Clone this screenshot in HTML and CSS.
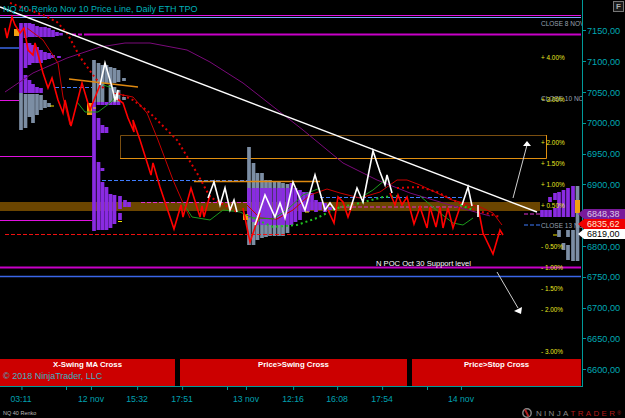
FILE: index.html
```html
<!DOCTYPE html>
<html lang="en">
<head>
    <meta charset="UTF-8">
    <meta name="viewport" content="width=device-width, initial-scale=1.0">
    <title>NQ 40 Renko - NinjaTrader chart</title>
    <link rel="stylesheet" href="styles.css">
</head>
<body>
    <div class="chart">
        <div class="main">
            <div class="plot">
                <svg class="plot-svg" width="582" height="386" viewBox="0 0 582 386">
                    <!-- levels and zones -->
                    <rect class="zone" x="0" y="202" width="540" height="9"/>
                    <path class="box-dark" d="M120.5 158V135.5H546"/>
                    <path class="box-light" d="M120 158.5H546.5V135"/>
                    <path class="level-magenta" d="M0 15.5H581"/>
                    <path class="level-blue-thin" d="M0 17.5H581"/>
                    <path class="level-magenta-thick" d="M88 34.5H581"/>
                    <path class="level-magenta-thick dashed" d="M72 34.5H88"/>
                    <path class="level-blue" d="M0 48H19"/>
                    <path class="level-magenta" d="M0 100.5H19M0 156.5H92M0 220.5H92"/>
                    <path class="level-magenta-thick" d="M0 267.5H581"/>
                    <path class="level-blue" d="M0 276.5H581"/>

                    <!-- TPO profiles, one stroke per column -->
                    <path class="tpo-purple" d="M21 23V93M25.5 23V38M25.5 43V68M25.5 75V93M29.5 23V37M33 24V37M37 26V37M41 27V37M45 27V37M49 28V37M53 30V37M57 32V36M61 33V35.5M29.5 43V65M33 45V63M37 47V63M41 50V63M45 52V60M49 53V59M53 55V58M59 56V58M29.5 80V93M33 84V93M37 87V93M41 88V93"/>
                    <path class="tpo-gray" d="M21 93V130M25.5 94V128M29.5 94V117M33 94V123M37 94V115M41 95V110M45 100V108M49 103V107"/>
                    <path class="tpo-gray" d="M94 60V102M98.5 63V102M102.5 65V102M106.5 65V83M110.5 67V83M114.5 68V83M118.5 70V82M124 78V81M110.5 85V102M114.5 87V102M118.5 90V102M124 97V100"/>
                    <path class="tpo-purple" d="M94 102V231M98.5 102V105M98.5 118V140M98.5 162V230M102.5 102V105M102.5 125V133M102.5 182V230M102.5 168V171M106.5 102V105M106.5 127V133M106.5 187V230M110.5 102V105M110.5 194V228M114.5 102V105M114.5 195V224M118.5 102V105M120 196V209M120 213V220M125 200V207M129 202V207"/>
                    <path class="tpo-gray" d="M249 147V245M253.5 163V245M257.5 173V240M262 173V238M266 180V237M270 180V236M274.5 181V236M279 182V236M283 183V236M287.5 184V233"/>
                    <path class="tpo-purple" d="M249 188V218M253.5 188V222M257.5 188V225M262 188V225M266 188V225M270 188V225M274.5 188V225M279 188V225M283 188V225M287.5 188V225M291.5 183V225M295.5 188V222M300 190V220M304 192V212M308 192V212M312 193V210M316 200V212M320 202V210M325 203V212M330 207V210"/>
                    <path class="tpo-gray" d="M577.5 186V261M573 230V261M568 245V260M568 230V237M563.5 243V250M559 230V237"/>
                    <path class="tpo-purple" d="M573 186V217M568 188V217M563.5 190V217M559 192V217M555 193V200M555 208V217M550 197V202M550 210V217M546 210V217M542 210V217"/>
                    <rect class="tpo-poc" x="575" y="200" width="5" height="13"/>
                    <rect class="tpo-poc" x="14" y="29" width="5" height="7"/>
                    <rect class="tpo-poc" x="87" y="103" width="5" height="12"/>
                    <rect class="tpo-poc" x="243" y="214" width="5" height="6"/>
                    <path class="tpo-mark" d="M93 108H96M50 106H54M118 221.5H122M553 235H557M305 212H309"/>

                    <!-- dashed session levels -->
                    <path class="level-dash-blue" d="M55 87.5H92M102 180.5H250M320 197.5H462M524 225H540"/>
                    <path class="level-dash-pink" d="M141 202.5H250M340 207H462M524 214H540"/>
                    <path class="level-dash-red" d="M5 234.5H502"/>
                    <path class="level-orange" d="M194 181.5H320M69 79L138 87"/>

                    <!-- thin moving averages -->
                    <polyline class="ma-purple" points="5,92 33,73 67,58 100,47 125,43 150,43 187,50 210,62 243,83 280,112 303,130 343,163 377,180 410,193 450,205 490,216"/>
                    <polyline class="ma-red" points="27,28 43,40 58,63 63,97 70,125"/>
                    <polyline class="ma-red" points="113,93 133,97 147,113 158,140 173,180 183,203 190,218"/>
                    <polyline class="ma-red" points="247,205 260,218 277,219 293,210 310,195 327,189 340,193 360,198 380,192 397,180 407,180 420,185 437,193 452,200 480,207 493,213 502,225"/>
                    <polyline class="ma-green" points="183,203 192,217 210,220 223,210 240,212 253,218 260,218 273,219 287,210 303,195 320,188"/>
                    <polyline class="ma-green" points="77,102 85,112 98,112 110,103 118,94"/>
                    <polyline class="ma-green" points="103,85 113,88"/>
                    <polyline class="ma-green" points="360,198 373,190 385,180"/>
                    <polyline class="ma-green" points="420,196 440,213 453,223 463,225 473,218"/>
                    <polyline class="dots-green" points="253,218 273,227 297,225 317,218 337,208 360,203 383,197 400,196"/>
                    <polyline class="dots-green" points="460,205 473,210"/>
                    <polyline class="dots-red" points="10,3 43,15 57,22 67,33 80,57 93,75 105,90"/>
                    <polyline class="dots-red" points="118,93 133,100 150,113 167,130 177,140 197,173 210,197 237,212"/>
                    <polyline class="dots-red" points="397,188 420,187 437,192 453,200 475,210 500,217"/>

                    <!-- price line -->
                    <polyline class="price-red" points="5,28 7,38 12,17 15,25 20,33 24,28 28,50 33,55 35,43 43,73 48,88 52,78 58,100 63,113 65,100 71,126 82,83 90,110 100,85"/>
                    <polyline class="price-red" points="116,98 123,103 128,118 134,132 133,120 140,140 151,175 153,163 160,187 174,229 181,205 183,217 191,188 200,217 202,206 204,217 210,195"/>
                    <polyline class="price-red" points="243,208 250,242 260,213"/>
                    <polyline class="price-red" points="328,210 334,223 338,197 343,202 348,217 353,203"/>
                    <polyline class="price-red" points="390,193 395,205 398,195 402,205 407,197 414,224 420,207 427,228 430,207 436,227 440,207 443,228 448,208 453,228 460,207"/>
                    <polyline class="price-red" points="478,207 483,233 493,254 500,230 503,235"/>
                    <polyline class="price-white" points="100,85 105,63 112,87 115,100 118,90 117,100"/>
                    <polyline class="price-white" points="208,198 214,182 220,205 225,188 230,210 234,200 237,212"/>
                    <polyline class="price-white" points="255,225 265,195 275,217 280,203 285,218 293,182 305,210 315,175 325,210 330,203 335,210"/>
                    <polyline class="price-white" points="350,210 357,188 363,202 373,151 380,172 385,185 387,175 392,193"/>
                    <polyline class="price-white" points="462,205 468,187 472,206"/>
                    <path class="price-white" d="M478 205V217"/>

                    <!-- drawing tools -->
                    <path class="trend" d="M0 7L537 212"/>
                    <path class="arrow-line" d="M513 198L527 145M497 272L518 308"/>
                    <path class="arrow-head" d="M523 146L527 141L531 146ZM514 311L522 307L521 314Z"/>

                    <!-- labels -->
                    <text class="title" x="3" y="12">NQ 40 Renko Nov 10 Price Line, Daily ETH TPO</text>
                    <text class="close-label" x="541" y="25.5">CLOSE 8 NOV</text>
                    <text class="close-label" x="541" y="101">CLOSE 10 NOV</text>
                    <text class="close-label" x="541" y="227.5">CLOSE 13 NOV</text>
                    <text class="pct" x="541" y="60">+ 4.00%</text>
                    <text class="pct" x="541" y="102">+ 3.00%</text>
                    <text class="pct" x="541" y="144.5">+ 2.00%</text>
                    <text class="pct" x="541" y="165.5">+ 1.50%</text>
                    <text class="pct" x="541" y="186.5">+ 1.00%</text>
                    <text class="pct" x="541" y="207.5">+ 0.50%</text>
                    <text class="pct" x="541" y="249">- 0.50%</text>
                    <text class="pct" x="541" y="270">- 1.00%</text>
                    <text class="pct" x="541" y="291">- 1.50%</text>
                    <text class="pct" x="541" y="312">- 2.00%</text>
                    <text class="pct" x="541" y="353.5">- 3.00%</text>
                    <text class="note" x="376" y="265.5">N POC Oct 30 Support level</text>
                </svg>

                <div class="signals">
                    <div class="signal signal-first">X-Swing MA Cross</div>
                    <div class="signal signal-mid">Price&gt;Swing Cross</div>
                    <div class="signal signal-last">Price&gt;Stop Cross</div>
                </div>
                <div class="copyright">© 2018 NinjaTrader, LLC</div>
            </div>

            <div class="price-axis">
                <div class="price">7150,00</div>
                <div class="price">7100,00</div>
                <div class="price">7050,00</div>
                <div class="price">7000,00</div>
                <div class="price">6950,00</div>
                <div class="price">6900,00</div>
                <div class="price"></div>
                <div class="price">6800,00</div>
                <div class="price">6750,00</div>
                <div class="price">6700,00</div>
                <div class="price">6650,00</div>
                <div class="price">6600,00</div>
                <div class="flags">
                    <div class="flag flag-purple">6848,38</div>
                    <div class="flag flag-red">6835,62</div>
                    <div class="flag flag-white">6819,00</div>
                </div>
                <div class="f-btn">F</div>
            </div>
        </div>

        <div class="time-axis">
            <div class="time-tick" style="left: 21px">03:11</div>
            <div class="time-tick" style="left: 66px"></div>
            <div class="time-tick" style="left: 91px">12 nov</div>
            <div class="time-tick" style="left: 137px">15:32</div>
            <div class="time-tick" style="left: 182px">17:51</div>
            <div class="time-tick" style="left: 227px"></div>
            <div class="time-tick" style="left: 246px">13 nov</div>
            <div class="time-tick" style="left: 293px">12:16</div>
            <div class="time-tick" style="left: 337px">16:08</div>
            <div class="time-tick" style="left: 382px">17:54</div>
            <div class="time-tick" style="left: 427px"></div>
            <div class="time-tick" style="left: 461px">14 nov</div>
        </div>

        <div class="footer">
            <span class="instrument">NQ 40 Renko</span>
            <span class="logo">
                <svg class="logo-icon" width="12" height="10" viewBox="0 0 12 10">
                    <circle cx="6" cy="5" r="4.2" fill="none" stroke="#8a8a8a" stroke-width="1.4"/>
                    <path d="M4 1.5L7.5 8.5" stroke="#b02020" stroke-width="2"/>
                </svg>
                <span class="logo-ninja">NINJA</span><span class="logo-trader">TRADER</span><span class="logo-reg">®</span>
            </span>
        </div>
    </div>
</body>
</html>
```

FILE: styles.css
```css
* {
    margin: 0;
    padding: 0;
    box-sizing: border-box;
}

body {
    background: #000;
    font-family: "Liberation Sans", Arial, sans-serif;
    overflow: hidden;
}

.chart {
    width: 625px;
    height: 418px;
    display: flex;
    flex-direction: column;
}

.main {
    display: flex;
    height: 387px;
}

.plot {
    position: relative;
    width: 583px;
    border-right: 1px solid #009a9a;
    border-bottom: 1px solid #009a9a;
}

.plot-svg {
    display: block;
}

.plot-svg path,
.plot-svg polyline {
    fill: none;
}

/* levels */
.zone { fill: #6b4500; }
.box-dark { stroke: #7a4e10; stroke-width: 1; }
.box-light { stroke: #e08f10; stroke-width: 1; }
.level-magenta { stroke: #e010e0; stroke-width: 1; }
.level-magenta-thick { stroke: #c800c8; stroke-width: 2; }
.level-magenta-thick.dashed { stroke-dasharray: 4 2; }
.level-blue { stroke: #3a66e6; stroke-width: 1.5; }
.level-blue-thin { stroke: #7aa6ff; stroke-width: 1; }
.level-dash-blue { stroke: #3f7dff; stroke-width: 1; stroke-dasharray: 4 2; }
.level-dash-pink { stroke: #e030d0; stroke-width: 1; stroke-dasharray: 4 2; }
.level-dash-red { stroke: #f01010; stroke-width: 1; stroke-dasharray: 4 2; }
.level-orange { stroke: #e08a10; stroke-width: 1.5; }

/* profiles */
.tpo-purple { stroke: #8a2be2; stroke-width: 3.7; }
.tpo-gray { stroke: #7c8ea4; stroke-width: 3.7; }
.tpo-poc { fill: #f0a010; }
.tpo-mark { stroke: #f0e000; stroke-width: 1; }

/* indicators */
.ma-purple { stroke: #7a0a7a; stroke-width: 1; }
.ma-red { stroke: #c80000; stroke-width: 1; }
.ma-green { stroke: #1c9a1c; stroke-width: 1; }
.dots-green { stroke: #20c020; stroke-width: 2; stroke-dasharray: 2 3; }
.dots-red { stroke: #e00000; stroke-width: 2; stroke-dasharray: 2 3; }
.price-red { stroke: #ff0000; stroke-width: 1.6; }
.price-white { stroke: #fff; stroke-width: 1.6; }
.trend { stroke: #fff; stroke-width: 1.5; }
.arrow-line { stroke: #d0d0d0; stroke-width: 1; }
.plot-svg .arrow-head { fill: #fff; }

/* labels */
.title { font-size: 9px; fill: #00b0b8; }
.close-label { font-size: 6.5px; fill: #9aa0b0; }
.pct { font-size: 6.4px; fill: #e8e820; }
.note { font-size: 7.6px; fill: #fff; }

.signals {
    position: absolute;
    left: 0;
    right: 0;
    bottom: 0;
    height: 27px;
    display: flex;
    gap: 5px;
}

.signal {
    background: #cc0000;
    color: #fff;
    font-size: 7.8px;
    font-weight: bold;
    text-align: center;
    padding-top: 1px;
}

.signal-first { width: 175px; }
.signal-mid { width: 227px; }
.signal-last { width: 169px; }

.copyright {
    position: absolute;
    left: 3px;
    top: 371px;
    font-size: 9px;
    color: #3fb0c0;
}

.price-axis {
    position: relative;
    width: 42px;
    padding-top: 15.6px;
}

.price {
    height: 30.8px;
    display: flex;
    align-items: center;
    gap: 1px;
    font-size: 9.2px;
    color: #00a8b4;
}

.price::before {
    content: "";
    width: 3px;
    height: 1px;
    background: #009a9a;
}

.flags {
    position: absolute;
    left: -5px;
    right: 0;
    top: 209px;
    display: flex;
    flex-direction: column;
}

.flag {
    height: 10px;
    padding-left: 9px;
    font-size: 9px;
    line-height: 10px;
    clip-path: polygon(0 50%, 6px 0, 100% 0, 100% 100%, 6px 100%);
}

.flag-purple { background: #7a1a9a; color: #d8c8e8; }
.flag-red { background: #f00000; color: #ffe8d0; }
.flag-white { background: #fff; color: #000; }

.f-btn {
    position: absolute;
    right: 1px;
    top: 1px;
    width: 11px;
    height: 11px;
    border: 1px solid #777;
    background: #1a1a1a;
    color: #aaa;
    font-size: 8px;
    font-weight: bold;
    line-height: 9px;
    text-align: center;
}

.time-axis {
    position: relative;
    height: 21px;
}

.time-tick {
    position: absolute;
    top: 7px;
    transform: translateX(-50%);
    font-size: 8.7px;
    color: #00a0b0;
    white-space: nowrap;
}

.time-tick::before {
    content: "";
    position: absolute;
    left: 50%;
    top: -7px;
    width: 1px;
    height: 3px;
    background: #009a9a;
}

.footer {
    display: flex;
    justify-content: space-between;
    align-items: center;
    height: 10px;
    padding: 0 4px 0 3px;
}

.instrument {
    font-size: 5.5px;
    color: #bbb;
}

.logo {
    display: flex;
    align-items: center;
    font-size: 8px;
    letter-spacing: 2.3px;
}

.logo-icon {
    margin-right: 3px;
}

.logo-ninja { color: #888; }
.logo-trader { color: #b01c1c; }
.logo-reg { color: #b01c1c; font-size: 5px; letter-spacing: 0; }
```
